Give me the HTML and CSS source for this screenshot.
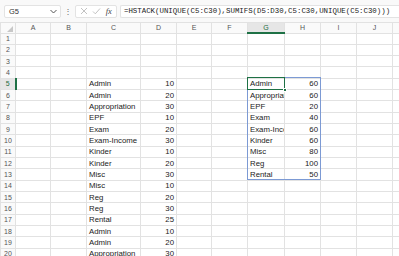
FILE: index.html
```html
<!DOCTYPE html>
<html lang="en">
<head>
  <meta charset="UTF-8" />
  <title>Sheet</title>
  <link rel="stylesheet" href="styles.css">
</head>
<body>
  <!-- Formula bar -->
  <div class="formula-bar">
    <div class="name-box">
      <span>G5</span>
      <svg class="chevron" width="7" height="5" viewBox="0 0 7 5"><path d="M0.5 1 L3.5 4 L6.5 1" fill="none" stroke="#555" stroke-width="1"/></svg>
    </div>
    <div class="dots">&#8942;</div>
    <div class="fx-box">
      <svg width="8" height="8" viewBox="0 0 8 8"><path d="M1 1 L7 7 M7 1 L1 7" stroke="#bbb" stroke-width="0.9"/></svg>
      <svg width="9" height="8" viewBox="0 0 9 8"><path d="M1 4.5 L3.3 6.8 L8 1.5" fill="none" stroke="#bbb" stroke-width="0.9"/></svg>
      <span class="fx">fx</span>
    </div>
    <div class="formula">=HSTACK(UNIQUE(C5:C30),SUMIFS(D5:D30,C5:C30,UNIQUE(C5:C30)))</div>
  </div>

  <!-- Grid -->
  <div class="grid-wrap">
    <table class="sheet">
      <colgroup>
        <col style="width:15px"><col style="width:35px"><col style="width:36px"><col style="width:54px"><col style="width:36px"><col style="width:35px"><col style="width:36px"><col style="width:37px"><col style="width:36px"><col style="width:36px"><col style="width:36px"><col style="width:40px">
      </colgroup>
      <tr class="head"><th class="corner"><span class="tri"></span></th><th>A</th><th>B</th><th>C</th><th>D</th><th>E</th><th>F</th><th class="sel-col">G</th><th>H</th><th>I</th><th>J</th><th></th></tr>
      <tr><th>1</th><td></td><td></td><td></td><td></td><td></td><td></td><td></td><td></td><td></td><td></td><td></td></tr>
      <tr><th>2</th><td></td><td></td><td></td><td></td><td></td><td></td><td></td><td></td><td></td><td></td><td></td></tr>
      <tr><th>3</th><td></td><td></td><td></td><td></td><td></td><td></td><td></td><td></td><td></td><td></td><td></td></tr>
      <tr><th>4</th><td></td><td></td><td></td><td></td><td></td><td></td><td></td><td></td><td></td><td></td><td></td></tr>
      <tr><th class="sel-row">5</th><td></td><td></td><td>Admin</td><td class="num">10</td><td></td><td></td><td>Admin</td><td class="num">60</td><td></td><td></td><td></td></tr>
      <tr><th>6</th><td></td><td></td><td>Admin</td><td class="num">20</td><td></td><td></td><td>Appropriation</td><td class="num">60</td><td></td><td></td><td></td></tr>
      <tr><th>7</th><td></td><td></td><td>Appropriation</td><td class="num">30</td><td></td><td></td><td>EPF</td><td class="num">20</td><td></td><td></td><td></td></tr>
      <tr><th>8</th><td></td><td></td><td>EPF</td><td class="num">10</td><td></td><td></td><td>Exam</td><td class="num">40</td><td></td><td></td><td></td></tr>
      <tr><th>9</th><td></td><td></td><td>Exam</td><td class="num">20</td><td></td><td></td><td>Exam-Income</td><td class="num">60</td><td></td><td></td><td></td></tr>
      <tr><th>10</th><td></td><td></td><td>Exam-Income</td><td class="num">30</td><td></td><td></td><td>Kinder</td><td class="num">60</td><td></td><td></td><td></td></tr>
      <tr><th>11</th><td></td><td></td><td>Kinder</td><td class="num">10</td><td></td><td></td><td>Misc</td><td class="num">80</td><td></td><td></td><td></td></tr>
      <tr><th>12</th><td></td><td></td><td>Kinder</td><td class="num">20</td><td></td><td></td><td>Reg</td><td class="num">100</td><td></td><td></td><td></td></tr>
      <tr><th>13</th><td></td><td></td><td>Misc</td><td class="num">30</td><td></td><td></td><td>Rental</td><td class="num">50</td><td></td><td></td><td></td></tr>
      <tr><th>14</th><td></td><td></td><td>Misc</td><td class="num">10</td><td></td><td></td><td></td><td></td><td></td><td></td><td></td></tr>
      <tr><th>15</th><td></td><td></td><td>Reg</td><td class="num">20</td><td></td><td></td><td></td><td></td><td></td><td></td><td></td></tr>
      <tr><th>16</th><td></td><td></td><td>Reg</td><td class="num">30</td><td></td><td></td><td></td><td></td><td></td><td></td><td></td></tr>
      <tr><th>17</th><td></td><td></td><td>Rental</td><td class="num">25</td><td></td><td></td><td></td><td></td><td></td><td></td><td></td></tr>
      <tr><th>18</th><td></td><td></td><td>Admin</td><td class="num">10</td><td></td><td></td><td></td><td></td><td></td><td></td><td></td></tr>
      <tr><th>19</th><td></td><td></td><td>Admin</td><td class="num">20</td><td></td><td></td><td></td><td></td><td></td><td></td><td></td></tr>
      <tr><th>20</th><td></td><td></td><td>Appropriation</td><td class="num">30</td><td></td><td></td><td></td><td></td><td></td><td></td><td></td></tr>
    </table>

    <!-- Selection overlays -->
    <div class="spill-range"></div>
    <div class="active-cell"><span class="handle"></span></div>
  </div>
</body>
</html>
```

FILE: styles.css
```css
* {
  box-sizing: border-box;
}

body {
  margin: 0;
  width: 399px;
  height: 256px;
  overflow: hidden;
  background: #fff;
  font-family: "Liberation Sans", Arial, sans-serif;
  color: #222;
}

.formula-bar {
  height: 22px;
  display: flex;
  align-items: center;
  padding: 0 0 0 4px;
  background: #f9f9f9;
  gap: 3px;
}

.name-box {
  width: 57px;
  height: 13px;
  background: #fff;
  border: 1px solid #e3e3e3;
  border-radius: 2px;
  display: flex;
  align-items: center;
  justify-content: space-between;
  padding: 0 3px 0 4px;
  font-size: 7.5px;
  color: #333;
}

.dots {
  width: 8px;
  text-align: center;
  font-size: 8px;
  color: #666;
}

.fx-box {
  width: 42px;
  height: 13px;
  background: #fff;
  border: 1px solid #e3e3e3;
  border-radius: 2px;
  display: flex;
  align-items: center;
  justify-content: space-around;
  padding: 0 2px;
}

.fx {
  font-family: "Liberation Serif", serif;
  font-style: italic;
  font-size: 8.5px;
  color: #444;
}

.formula {
  flex: 1;
  height: 13px;
  background: #fff;
  border: 1px solid #e3e3e3;
  border-right: none;
  border-radius: 2px 0 0 2px;
  padding-left: 3px;
  font-family: "Liberation Mono", monospace;
  font-size: 7.4px;
  line-height: 11px;
  white-space: nowrap;
  overflow: hidden;
  color: #222;
}

.grid-wrap {
  position: relative;
}

.sheet {
  border-collapse: collapse;
  table-layout: fixed;
  width: 433px;
}

.sheet tr {
  height: 11.33px;
}

.sheet tr.head {
  height: 10px;
}

.sheet th,
.sheet td {
  border: 1px solid #e2e2e2;
  padding: 0 2px;
  white-space: nowrap;
  overflow: hidden;
  font-size: 7.8px;
  line-height: 9px;
  font-weight: normal;
}

.sheet th {
  background: #fafafa;
  color: #555;
  font-size: 7px;
  text-align: center;
  padding: 0;
}

.sheet td.num {
  text-align: right;
}

.sheet th.sel-col {
  background: #e6e6e6;
  color: #1e6b41;
  border-bottom: 2px solid #1e7145;
}

.sheet th.sel-row {
  background: #e6e6e6;
  color: #1e6b41;
  border-right: 2px solid #1e7145;
}

.corner {
  position: relative;
}

.tri {
  position: absolute;
  right: 2px;
  bottom: 1px;
  width: 0;
  height: 0;
  border-left: 6px solid transparent;
  border-bottom: 6px solid #c8c8c8;
}

.spill-range {
  position: absolute;
  left: 247px;
  top: 55px;
  width: 74px;
  height: 103px;
  border: 1px solid #7c9ad4;
}

.active-cell {
  position: absolute;
  left: 247px;
  top: 55px;
  width: 38px;
  height: 12.5px;
  border: 1.5px solid #1e7145;
}

.handle {
  position: absolute;
  right: -3px;
  bottom: -3px;
  width: 4px;
  height: 4px;
  background: #1e7145;
  border: 1px solid #fff;
}
```
